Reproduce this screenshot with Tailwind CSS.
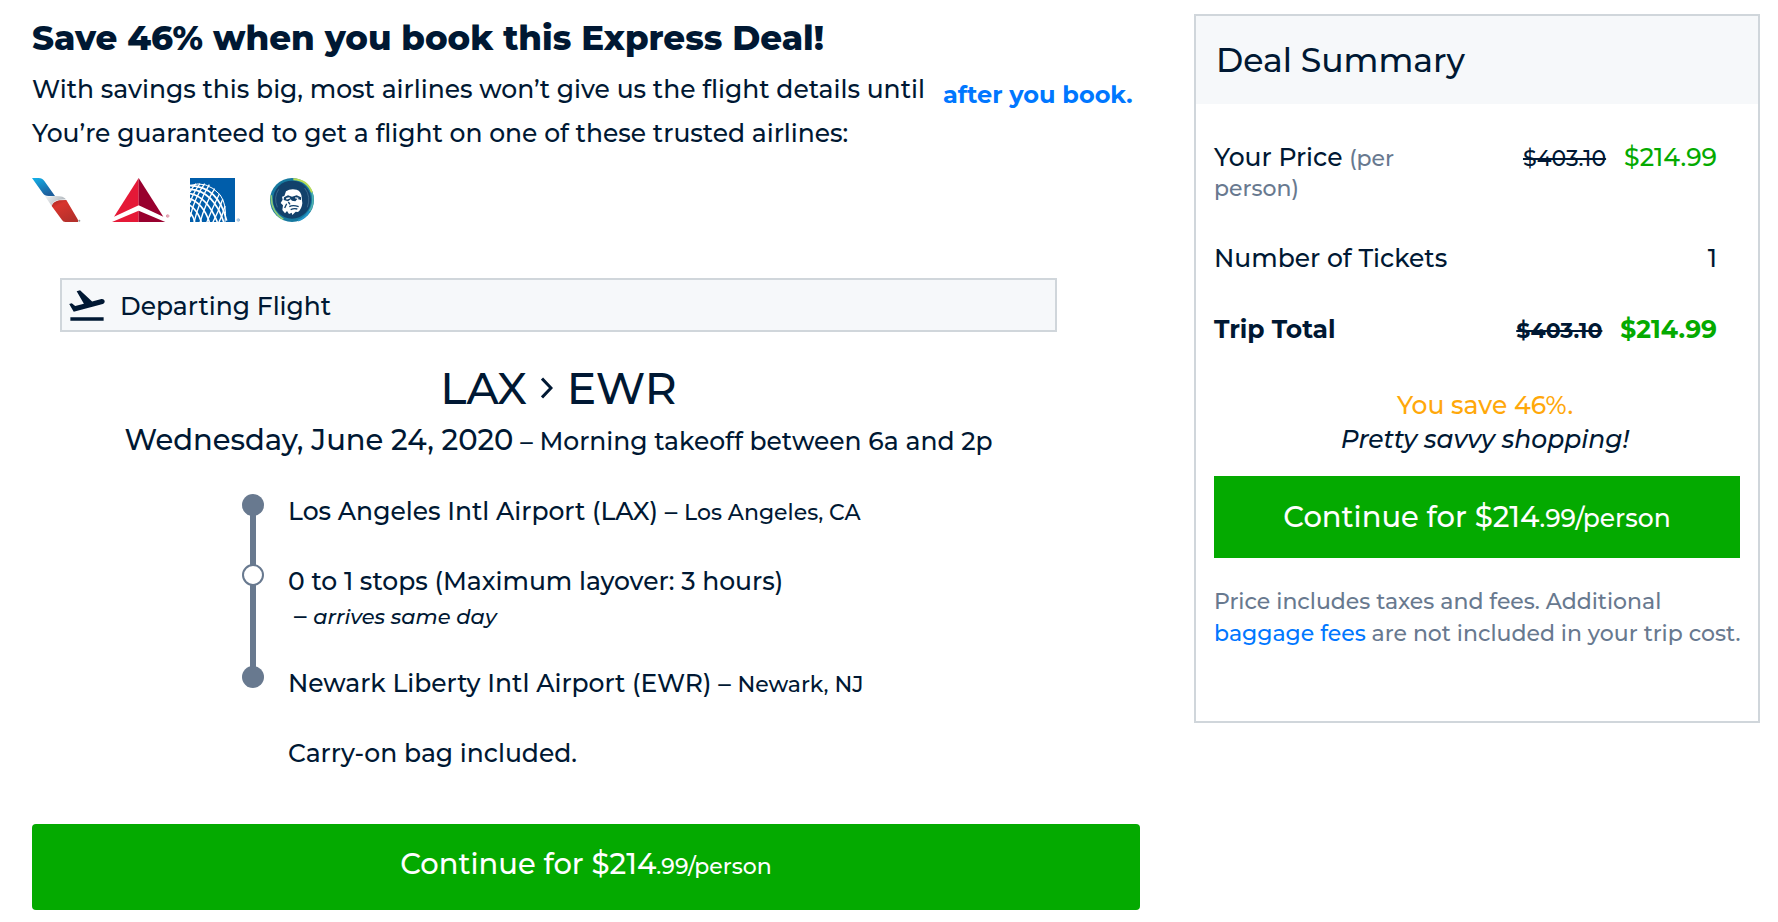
<!DOCTYPE html>
<html lang="en">
<head>
    <meta charset="UTF-8">
    <meta name="viewport" content="width=device-width, initial-scale=1.0">
    <title>Express Deal</title>
    <script src="https://cdn.jsdelivr.net/npm/@tailwindcss/browser@4"></script>
</head>
<body class="bg-white text-[#001833] font-['Montserrat','Inter',sans-serif] text-[25px] font-medium">
    <div class="grid grid-cols-[minmax(0,1108fr)_minmax(0,566fr)] items-start gap-[54px] pt-[14px] pl-8 pr-[18px]">
        <main>
            <h1 class="text-[34px] leading-[48px] font-extrabold">
                Save 46% when you book this Express Deal!
            </h1>
            <div class="leading-[44px] mt-[5px]">
                <p class="flex items-start gap-[18px]">
                    With savings this big, most airlines won’t give us the flight details until
                    <a href="#" class="h-[38px] mt-[6px] text-[24px] font-bold text-[#0077ff]">after you book.</a>
                </p>
                <p>You’re guaranteed to get a flight on one of these trusted airlines:</p>
            </div>

            <!-- airline logos -->
            <div class="flex gap-5 mt-[23px]">
                <svg class="w-[60px] h-[44px]" viewBox="0 0 180 132" role="img" aria-label="American Airlines">
                    <defs>
                        <linearGradient id="aaBlue" x1="0" y1="0" x2="0.5" y2="1">
                            <stop offset="0" stop-color="#12b2ea"/>
                            <stop offset="1" stop-color="#1d5f9d"/>
                        </linearGradient>
                        <linearGradient id="aaRed" x1="0" y1="0" x2="0.6" y2="1">
                            <stop offset="0" stop-color="#a32a25"/>
                            <stop offset="0.3" stop-color="#d8352d"/>
                            <stop offset="1" stop-color="#b5302b"/>
                        </linearGradient>
                        <linearGradient id="aaGray" x1="0" y1="0" x2="1" y2="0.4">
                            <stop offset="0" stop-color="#f3f5f6"/>
                            <stop offset="1" stop-color="#aeb5bb"/>
                        </linearGradient>
                    </defs>
                    <path fill="url(#aaBlue)" d="M0 0h20q11 0 17 9l32 45H50q-13 0-18-9z"/>
                    <path fill="url(#aaRed)" d="M59 84q3-12 22-17l22-1 34 58q3 5 1 8h-38q-7 0-10-6z"/>
                    <path fill="url(#aaGray)" d="M38 53q10 4 28 1 28-2 36 10l-18 1q-22 3-25 19z"/>
                    <circle cx="142" cy="128" r="3" fill="#9a9a9a"/>
                </svg>
                <svg class="w-[58px] h-[44px]" viewBox="0 0 174 132" role="img" aria-label="Delta">
                    <path fill="#e51937" d="M80 0v82L6 116z"/>
                    <path fill="#98002e" d="M80 0v82l74 34z"/>
                    <path fill="#e51937" d="M80 98v34H0z"/>
                    <path fill="#98002e" d="M80 98v34h80z"/>
                    <circle cx="167" cy="114" r="4" fill="none" stroke="#d3728a" stroke-width="2"/>
                    <circle cx="167" cy="114" r="2" fill="#d3728a"/>
                </svg>
                <svg class="w-[60px] h-[44px]" viewBox="0 0 180 132" role="img" aria-label="United">
                    <defs>
                        <clipPath id="uaBox"><path d="M0 0h135v132H0z"/></clipPath>
                    </defs>
                    <path fill="#005daa" d="M0 0h135v132H0z"/>
                    <g clip-path="url(#uaBox)" fill="none" stroke="#fff" stroke-width="4">
                        <g stroke-width="5">
                            <path d="M-5 46Q50 52 82 132"/>
                            <path d="M-5 33Q70 36 101 132"/>
                            <path d="M-5 23Q84 22 110 128"/>
                            <path d="M-5 61Q38 72 58 132"/>
                            <path d="M-5 79Q22 94 34 132"/>
                            <path d="M-5 100Q10 112 14 132"/>
                        </g>
                        <path d="M0 22Q50 6 90 50Q112 80 105 132" stroke-width="3"/>
                        <path d="M0 118Q14 58 44 17"/>
                        <path d="M12 134Q26 72 58 20"/>
                        <path d="M30 134Q45 78 74 32"/>
                        <path d="M50 134Q66 92 88 48"/>
                        <path d="M68 134Q86 100 98 64"/>
                        <path d="M86 134Q98 112 105 84"/>
                        <path d="M0 74Q12 40 30 17"/>
                        <path d="M0 42Q8 26 18 17"/>
                    </g>
                    <circle cx="145" cy="126" r="4" fill="none" stroke="#7ba9d2" stroke-width="2"/>
                    <circle cx="145" cy="126" r="2" fill="#7ba9d2"/>
                </svg>
                <svg class="w-[44px] h-[44px]" viewBox="0 0 132 132" role="img" aria-label="Alaska Airlines">
                    <circle cx="66" cy="66" r="66" fill="#17799f"/>
                    <path fill="none" stroke="#b5db55" stroke-width="6" d="M70 4Q112 6 126 44"/>
                    <path fill="none" stroke="#4fb3b0" stroke-width="5" d="M126 44Q134 76 118 100"/>
                    <path fill="none" stroke="#8fcb78" stroke-width="5" d="M4 52Q2 100 40 124"/>
                    <path fill="none" stroke="#2595c9" stroke-width="6" d="M118 100Q104 122 84 128"/>
                    <circle cx="66" cy="65" r="57" fill="#12416b"/>
                    <path fill="none" stroke="#4d7898" stroke-width="2" d="M26 34Q10 58 22 88M104 30Q124 56 112 88"/>
                    <path fill="#fff" d="M48 40Q60 31 80 35Q94 40 95 58L97 76Q95 94 84 102L77 101L67 111L65 104L57 108L51 99L45 106L37 96L39 82L32 75L38 65L36 56L43 54z"/>
                    <path fill="#12416b" d="M42 58L54 52L66 56L80 52L93 58V66L82 63L76 70L66 68L62 64L54 70L41 66z"/>
                    <path fill="#fff" d="M48 60l10-2 3 3-11 4zM76 58l10 1-2 4-9-2z"/>
                    <path fill="none" stroke="#12416b" stroke-width="4" d="M50 77L44 90M58 86Q68 80 86 86M62 95Q72 90 82 93M55 72L60 79"/>
                </svg>
            </div>

            <section class="mt-14 ml-7 mr-[83px]">
                <h2 class="flex items-center gap-3 h-[54px] pl-1 pt-1 border-2 border-[#d0d6db] bg-[#f6f8fa]">
                    <svg class="w-[42px] h-[42px] -mt-1" viewBox="0 0 24 24" fill="currentColor" aria-hidden="true">
                        <path d="M2.5 19h19v2h-19zm19.57-9.36c-.21-.8-1.04-1.28-1.84-1.06L14.92 10l-6.9-6.43-1.93.51 4.14 7.17-4.97 1.33-1.97-1.54-1.45.39 1.82 3.16.77 1.33 1.6-.43 5.31-1.42 4.35-1.16L21 11.49c.81-.23 1.28-1.05 1.07-1.85z"/>
                    </svg>
                    Departing Flight
                </h2>
                <div class="text-center mt-7">
                    <h3 class="flex items-center justify-center gap-[14px] text-[44px] leading-[56px]">
                        LAX
                        <svg class="w-3 h-[22px]" viewBox="0 0 12 22" fill="none" stroke="currentColor" stroke-width="3" role="img" aria-label="to">
                            <path d="M1 1.5L10 11L1 20.5"/>
                        </svg>
                        EWR
                    </h3>
                    <p class="leading-[48px]"><span class="text-[29px]">Wednesday, June 24, 2020</span> – Morning takeoff between 6a and 2p</p>
                </div>

                <!-- itinerary timeline -->
                <ul class="mt-[29px] ml-[182px]">
                    <li class="flex gap-6 h-[70px]">
                        <div class="flex flex-col items-center">
                            <span class="size-[22px] shrink-0 rounded-full bg-[#68798f]"></span>
                            <span class="w-[6px] grow -my-px bg-[#68798f]"></span>
                        </div>
                        <p class="leading-[34px]">Los Angeles Intl Airport (LAX) – <span class="text-[22px] leading-none">Los Angeles, CA</span></p>
                    </li>
                    <li class="flex gap-6 h-[102px]">
                        <div class="flex flex-col items-center">
                            <span class="size-[22px] shrink-0 rounded-full border-2 border-[#68798f] bg-white"></span>
                            <span class="w-[6px] grow -my-px bg-[#68798f]"></span>
                        </div>
                        <div class="leading-[34px]">
                            <p>0 to 1 stops (Maximum layover: 3 hours)</p>
                            <p class="pl-[6px]">– <em class="text-[21px] leading-none">arrives same day</em></p>
                        </div>
                    </li>
                    <li class="flex gap-6 h-[70px]">
                        <span class="size-[22px] shrink-0 rounded-full bg-[#68798f]"></span>
                        <p class="leading-[34px]">Newark Liberty Intl Airport (EWR) – <span class="text-[22px] leading-none">Newark, NJ</span></p>
                    </li>
                    <li class="pl-[46px] leading-[34px]">Carry-on bag included.</li>
                </ul>
            </section>

            <button type="button" class="block w-full h-[86px] mt-[54px] pb-[6px] rounded bg-[#04aa00] text-white text-[29px]">
                Continue for $214<span class="text-[22px]">.99/person</span>
            </button>
        </main>

        <aside class="border-2 border-[#d0d6db] pb-[71px]">
            <h2 class="flex items-center h-[88px] pl-5 pt-px bg-[#f6f8fa] text-[33px]">Deal Summary</h2>
            <div class="pt-[38px] px-[18px]">
                <dl class="flex flex-col gap-[41px] pr-[23px] leading-[30px]">
                    <div class="flex justify-between">
                        <dt class="w-[240px]">Your Price <span class="text-[22px] leading-none text-[#68798f]">(per person)</span></dt>
                        <dd><s class="text-[22px] leading-none mr-[18px]">$403.10</s><span class="text-[#04aa00]">$214.99</span></dd>
                    </div>
                    <div class="flex justify-between">
                        <dt>Number of Tickets</dt>
                        <dd>1</dd>
                    </div>
                    <div class="flex justify-between font-bold">
                        <dt>Trip Total</dt>
                        <dd><s class="text-[22px] leading-none mr-[18px]">$403.10</s><span class="text-[#04aa00]">$214.99</span></dd>
                    </div>
                </dl>
                <div class="mt-[44px] ml-4 text-center leading-[34px]">
                    <p class="text-[#ffa80a]">You save 46%.</p>
                    <p class="italic">Pretty savvy shopping!</p>
                </div>
                <button type="button" class="block w-full h-[82px] mt-5 bg-[#04aa00] text-white text-[29px]">
                    Continue for $214<span class="text-[25px]">.99/person</span>
                </button>
                <p class="mt-7 -mr-3 text-[22px] leading-8 text-[#68798f]">
                    Price includes taxes and fees. Additional <a href="#" class="text-[#0077ff]">baggage fees</a> are not included in your trip cost.
                </p>
            </div>
        </aside>
    </div>
</body>
</html>
